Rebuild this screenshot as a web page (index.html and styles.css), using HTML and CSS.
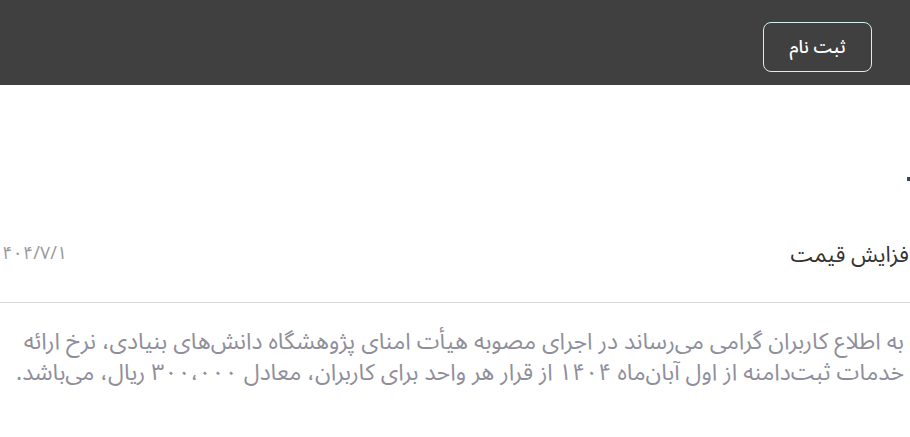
FILE: index.html
```html
<!DOCTYPE html>
<html lang="fa" dir="rtl">
<head>
<meta charset="utf-8">
<link rel="stylesheet" href="styles.css">
</head>
<body>
<header class="topbar">
  <button class="signup">ثبت نام</button>
</header>
<main class="main">
  <div class="page-title"><span class="title-dot"></span></div>
  <div class="news-head">
    <h2 class="news-title">افزایش قیمت</h2>
    <span class="news-date">۱۴۰۴/۷/۱</span>
  </div>
  <div class="news-body">
    <p class="news-text">به اطلاع کاربران گرامی می‌رساند در اجرای مصوبه هیأت امنای پژوهشگاه دانش‌های بنیادی، نرخ ارائه<br>خدمات ثبت‌دامنه از اول آبان‌ماه ۱۴۰۴ از قرار هر واحد برای کاربران، معادل ۳۰۰،۰۰۰ ریال، می‌باشد.</p>
  </div>
</main>
</body>
</html>
```
FILE: styles.css
```css
html, body {
  margin: 0;
  padding: 0;
}
body {
  direction: rtl;
  overflow: hidden;
  background: #ffffff;
  font-family: "Noto Sans Arabic", "DejaVu Sans", sans-serif;
  width: 910px;
  height: 437px;
}
.topbar {
  height: 85px;
  background: #404040;
  display: flex;
  align-items: center;
  padding-right: 38px;
  box-sizing: border-box;
}
.signup {
  width: 109px;
  height: 50px;
  margin-top: 8px;
  border: 1px solid #d6eef0;
  border-radius: 8px;
  background: transparent;
  color: #ffffff;
  font-family: inherit;
  font-size: 18px;
  font-weight: 500;
  padding: 0;
}
.main {
  margin: 0 -4px 0 -10px;
}
.page-title {
  height: 145px;
  display: flex;
  align-items: flex-start;
  padding-top: 92px;
  box-sizing: border-box;
  padding-right: 3px;
}
.title-dot {
  width: 4px;
  height: 4px;
  background: #3c4556;
}
.news-head {
  display: flex;
  justify-content: space-between;
  align-items: center;
  height: 50px;
  border-bottom: 1px solid #d8d8d8;
  padding-bottom: 22px;
}
.news-title {
  margin: 0;
  font-size: 22px;
  font-weight: 400;
  color: #333333;
}
.news-date {
  font-size: 18px;
  color: #9a9a9a;
  margin-left: 2px;
  margin-top: -4px;
}
.news-body {
  padding: 23px 10px 0 0;
}
.news-text {
  margin: 0;
  font-size: 23px;
  line-height: 31px;
  color: #8f8f9c;
  white-space: nowrap;
}
```
